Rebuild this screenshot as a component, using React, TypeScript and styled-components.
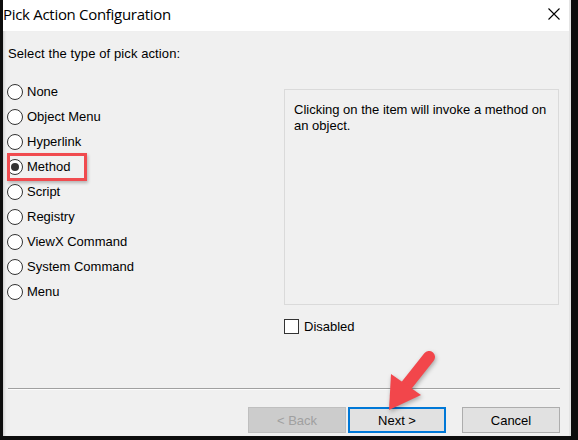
import { createGlobalStyle } from 'styled-components';
import styled from 'styled-components';

const GlobalStyle = createGlobalStyle`
  html, body {
    margin: 0;
    padding: 0;
    background: #141414;
  }
  body {
    font-family: "Liberation Sans", Arial, sans-serif;
  }
`;

const Frame = styled.div`
  position: relative;
  width: 578px;
  height: 440px;
  box-sizing: border-box;
  padding: 0 7px 4px 3px;
  background: #0d0d0d;
  display: flex;
`;

const Window = styled.div`
  flex: 1;
  display: flex;
  flex-direction: column;
  border-right: 2px solid #e4e4e4;
  background: #f0f0f0;
`;

const TitleBar = styled.div`
  height: 32px;
  box-sizing: border-box;
  padding: 0 9px 4px 0;
  background: #fff;
  display: flex;
  align-items: center;
  justify-content: space-between;
`;

const Title = styled.div`
  font-family: "Open Sans", "Noto Sans", sans-serif;
  font-size: 15px;
  color: #000;
  letter-spacing: -0.3px;
`;

const CloseIcon = styled.svg`
  display: block;
  width: 12px;
  height: 12px;
`;

const Body = styled.div`
  flex: 1;
  display: flex;
  flex-direction: column;
  padding: 0 9px 3px 4px;
  box-shadow: inset 3px 0 3px -2px rgba(0, 0, 0, 0.18);
  font-size: 13px;
  color: #000;
`;

const Heading = styled.div`
  margin-top: 15px;
  padding-left: 1px;
  line-height: 16px;
  letter-spacing: 0.1px;
`;

const Main = styled.div`
  display: flex;
  margin-top: 17px;
`;

const RadioList = styled.div`
  width: 277px;
  display: flex;
  flex-direction: column;
`;

const RadioRow = styled.label`
  position: relative;
  height: 25px;
  display: flex;
  align-items: center;
  gap: 4px;
`;

const Circle = styled.span<{ $checked: boolean }>`
  width: 16px;
  height: 16px;
  box-sizing: border-box;
  border: 1px solid #333;
  border-radius: 50%;
  background: #fff;
  display: flex;
  align-items: center;
  justify-content: center;
  &::after {
    content: '';
    display: ${p => (p.$checked ? 'block' : 'none')};
    width: 8px;
    height: 8px;
    border-radius: 50%;
    background: #333;
  }
`;

const Highlight = styled.span`
  position: absolute;
  left: 0;
  top: -1px;
  width: 80px;
  height: 28px;
  box-sizing: border-box;
  border: 3px solid #f04b4f;
  box-shadow: 1px 2px 3px rgba(0, 0, 0, 0.25);
`;

const RightColumn = styled.div`
  width: 275px;
  display: flex;
  flex-direction: column;
`;

const DescBox = styled.div`
  margin-top: 10px;
  height: 216px;
  box-sizing: border-box;
  border: 1px solid #dadada;
  padding: 12px 9px;
  line-height: 16px;
`;

const CheckRow = styled.label`
  margin-top: 14px;
  display: flex;
  align-items: center;
  gap: 5px;
  height: 15px;
`;

const CheckBox = styled.span`
  width: 15px;
  height: 15px;
  box-sizing: border-box;
  border: 1px solid #333;
  background: #fff;
`;

const Separator = styled.div`
  margin-top: 54px;
  margin-left: 1px;
  height: 1px;
  background: #a0a0a0;
  border-bottom: 1px solid #fcfcfc;
`;

const ButtonRow = styled.div`
  margin-top: 17px;
  display: flex;
  justify-content: flex-end;
`;

const Button = styled.div<{ $variant?: 'disabled' | 'default'; $gap?: number }>`
  width: 98px;
  height: 26px;
  box-sizing: border-box;
  margin-left: ${p => p.$gap ?? 0}px;
  display: flex;
  align-items: center;
  justify-content: center;
  border: ${p =>
    p.$variant === 'default'
      ? '2px solid #0078d7'
      : p.$variant === 'disabled'
        ? '1px solid #bfbfbf'
        : '1px solid #adadad'};
  background: ${p => (p.$variant === 'disabled' ? '#cccccc' : '#e1e1e1')};
  color: ${p => (p.$variant === 'disabled' ? '#a0a0a0' : '#000')};
`;

const ArrowLayer = styled.svg`
  position: absolute;
  left: 380px;
  top: 345px;
  width: 60px;
  height: 75px;
  overflow: visible;
  filter: drop-shadow(1px 2px 2px rgba(0, 0, 0, 0.3));
`;

const OPTIONS = [
  'None',
  'Object Menu',
  'Hyperlink',
  'Method',
  'Script',
  'Registry',
  'ViewX Command',
  'System Command',
  'Menu',
];

export default function App() {
  const selected = 'Method';
  return (
    <>
      <GlobalStyle />
      <Frame>
        <Window>
          <TitleBar>
            <Title>Pick Action Configuration</Title>
            <CloseIcon viewBox="0 0 12 12">
              <path d="M0.5 0.5 L11.5 11.5 M11.5 0.5 L0.5 11.5" stroke="#000" strokeWidth="1.1" fill="none" />
            </CloseIcon>
          </TitleBar>
          <Body>
            <Heading>Select the type of pick action:</Heading>
            <Main>
              <RadioList>
                {OPTIONS.map(opt => (
                  <RadioRow key={opt}>
                    <Circle $checked={opt === selected} />
                    <span>{opt}</span>
                    {opt === selected && <Highlight />}
                  </RadioRow>
                ))}
              </RadioList>
              <RightColumn>
                <DescBox>Clicking on the item will invoke a method on an object.</DescBox>
                <CheckRow>
                  <CheckBox />
                  <span>Disabled</span>
                </CheckRow>
              </RightColumn>
            </Main>
            <Separator />
            <ButtonRow>
              <Button $variant="disabled">&lt; Back</Button>
              <Button $variant="default" $gap={2}>Next &gt;</Button>
              <Button $gap={16}>Cancel</Button>
            </ButtonRow>
          </Body>
        </Window>
        <ArrowLayer viewBox="380 345 60 75">
          <line x1="429" y1="357" x2="406" y2="386" stroke="#f2464b" strokeWidth="12" strokeLinecap="round" />
          <polygon points="391,374 421,395 389,410" fill="#f2464b" />
        </ArrowLayer>
      </Frame>
    </>
  );
}
